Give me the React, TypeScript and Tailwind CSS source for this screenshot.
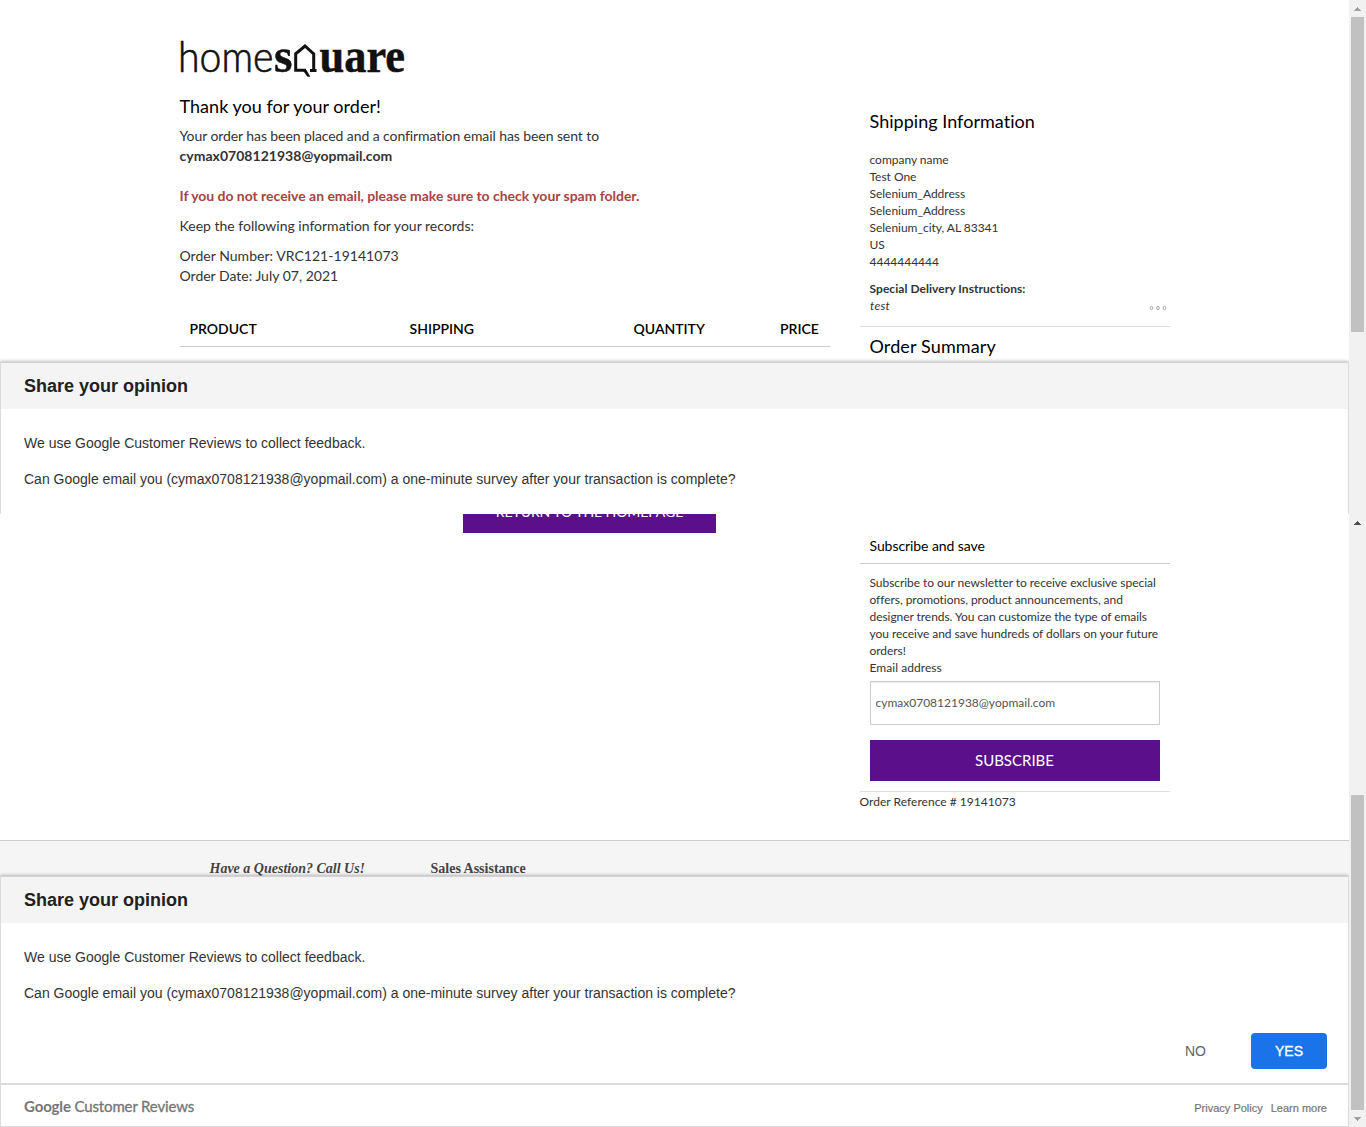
import React from "react";

function Logo() {
  return (
    <svg width="228" height="44" viewBox="0 0 228 44" className="block" role="img" aria-label="homesquare">
      <g fill="#111" stroke="#111">
        <text x="-2" y="36.500" fontFamily="Lato" fontWeight="300" fontSize="43.500" strokeWidth="0.700" textLength="95.500" lengthAdjust="spacingAndGlyphs">home</text>
        <text x="94" y="36.500" fontFamily="Liberation Serif" fontWeight="700" fontSize="49" strokeWidth="0.500" textLength="18.500" lengthAdjust="spacingAndGlyphs">s</text>
        <text x="139.500" y="36.500" fontFamily="Liberation Serif" fontWeight="700" fontSize="49" strokeWidth="0.500" textLength="85.500" lengthAdjust="spacingAndGlyphs">uare</text>
      </g>
      <path d="M130 35.500H136.500M133.700 36.500V18.800L125 11L115.700 18.800V35.300H126" fill="none" stroke="#111" strokeWidth="3" />
      <path d="M122.500 35H126.500L130.300 41.800H127.500Z" fill="#111" />
    </svg>
  );
}

function Arrow({ down, dark }: { down?: boolean; dark?: boolean }) {
  return (
    <svg width="17" height="17" viewBox="0 0 17 17" shapeRendering="crispEdges" className="block shrink-0">
      <path d={down ? "M5 7h7v1h-1v1h-1v1h-1v1h-1v-1h-1v-1h-1v-1h-1z" : "M8 7h1v1h1v1h1v1h1v1h-7v-1h1v-1h1v-1h1z"} fill={dark ? "#505050" : "#a3a3a3"} />
    </svg>
  );
}

function Survey() {
  return (
    <div className="h-[251px] w-[1349px] border border-[#dadce0] border-t-[#d2d2d2] bg-white font-['Liberation_Sans',sans-serif] shadow-[0_0_4px_rgba(0,0,0,0.4)]">
      <div className="flex h-[46px] items-center bg-[#f4f4f4] pl-[23px] text-[18px] font-bold text-[#212121]">Share your opinion</div>
      <div className="h-[160px] pl-[23px] pt-[25px] text-[14px] leading-[18px] text-[#333]">
        <p>We use Google Customer Reviews to collect feedback.</p>
        <p className="mt-[18px]">Can Google email you (cymax0708121938@yopmail.com) a one-minute survey after your transaction is complete?</p>
        <div className="mt-[31px] flex items-center justify-end pr-[21px]">
          <button className="mr-[45px] text-[14px] text-[#5f6368]">NO</button>
          <button className="h-9 w-[76px] rounded-[4px] bg-[#1a73e8] text-[14px] text-white [-webkit-text-stroke:0.3px_white]">YES</button>
        </div>
      </div>
      <div className="flex h-[43px] items-center justify-between border-t-2 border-[#dadce0] pl-[23px] pr-[21px] pt-[1px] text-[#757575]">
        <span className="font-['Lato',sans-serif] text-[15px] tracking-[-0.14px]"><b className="font-bold">Google</b> <span className="[-webkit-text-stroke:0.3px_#757575]">Customer Reviews</span></span>
        <span className="mt-[3px] flex gap-2 text-[11px] [-webkit-text-stroke:0.2px_#757575]"><a>Privacy Policy</a><a>Learn more</a></span>
      </div>
    </div>
  );
}

export default function App() {
  return (
    <div className="h-[1127px] w-[1366px] overflow-hidden bg-white font-['Lato',sans-serif] text-[14px] leading-5 text-[#333] [font-variant-ligatures:none]">
      <section className="flex h-[514px] overflow-hidden">
        <div className="w-[1349px] overflow-hidden">
          <div className="ml-[180px] flex h-[362px] w-[990px] justify-between">
            <main className="w-[650px] pt-[35px]">
              <Logo />
              <div className="-ml-[0.5px]">
                <h1 className="mt-[17px] text-[18px] leading-5 tracking-[0.03px] text-black">Thank you for your order!</h1>
                <p className="mt-[10px]"><span className="tracking-[-0.085px]">Your order has been placed and a confirmation email has been sent to</span><br /><b className="tracking-[0.03px]">cymax0708121938@yopmail.com</b></p>
                <p className="mt-5 font-bold tracking-[-0.03px] text-[#a94442]">If you do not receive an email, please make sure to check your spam folder.</p>
                <p className="mt-[10px]">Keep the following information for your records:</p>
                <p className="mt-[10px]"><span className="tracking-[0.03px]">Order Number: VRC121-19141073</span><br />Order Date: July 07, 2021</p>
              </div>
              <div className="mt-[26px] flex h-[35px] border-b border-[#ccc] pt-[7px] font-semibold text-black">
                <span className="w-[220px] pl-[9.5px]">PRODUCT</span>
                <span className="w-[224px] pl-[9.5px]">SHIPPING</span>
                <span className="w-[146px] pl-[9.5px]">QUANTITY</span>
                <span className="pl-[10px]">PRICE</span>
              </div>
            </main>
            <aside className="w-[310px] pt-[111px] text-[12px] leading-[17px]">
              <h2 className="pl-[9.5px] text-[18px] leading-5 tracking-[0.03px] text-black">Shipping Information</h2>
              <address className="mt-5 pl-[9.5px] not-italic tracking-[-0.02px]">company name<br />Test One<br />Selenium_Address<br />Selenium_Address<br />Selenium_city, AL 83341<br />US<br />4444444444</address>
              <p className="mt-[10px] pl-[9.5px] font-bold tracking-[0.05px]">Special Delivery Instructions:</p>
              <div className="flex h-[30px] justify-between border-b border-[#ddd] pl-[10px] pr-[3px]">
                <i className="tracking-[0.3px]">test</i>
                <svg width="18" height="6" viewBox="0 0 18 6" className="mt-[8px]" fill="none" stroke="#aaa" strokeWidth="1">
                  <ellipse cx="2.500" cy="3" rx="1.300" ry="1.700" /><ellipse cx="9" cy="3" rx="1.300" ry="1.700" /><ellipse cx="15.500" cy="3" rx="1.300" ry="1.700" />
                </svg>
              </div>
              <h2 className="mt-[9px] pl-[9.5px] text-[18px] leading-5 tracking-[0.12px] text-black">Order Summary</h2>
            </aside>
          </div>
          <Survey />
        </div>
        <div className="w-[17px] bg-[#f1f1f1]"><Arrow /><div className="ml-[2px] h-[315px] w-[13px] bg-[#c1c1c1]" /></div>
      </section>
      <section className="flex h-[613px] overflow-hidden">
        <div className="w-[1349px] overflow-hidden">
          <div className="ml-[180px] flex h-[326px] w-[990px] justify-between">
            <main className="w-[650px] pl-[283px]">
              <div className="-mt-[22px] flex h-[41px] w-[253px] items-center justify-center bg-[#5b0f8b] pb-[2px] text-[14px] tracking-[-0.08px] text-white">RETURN TO THE HOMEPAGE</div>
            </main>
            <aside className="w-[310px] pt-[22px] text-[12px] leading-[17px]">
              <h3 className="h-7 border-b border-[#ccc] pl-[9.5px] text-[14px] leading-5 tracking-[-0.07px] text-black">Subscribe and save</h3>
              <div className="border-b border-[#ddd] px-[10px] pb-[10px] pt-[10px]">
                <p className="-ml-[0.5px] whitespace-nowrap tracking-[-0.05px]">Subscribe to our newsletter to receive exclusive special<br />offers, promotions, product announcements, and<br /><span className="tracking-[-0.06px]">designer trends. You can customize the type of emails</span><br />you receive and save hundreds of dollars on your future<br />orders!</p>
                <p className="-ml-[0.5px] tracking-[0.05px]">Email address</p>
                <input readOnly value="cymax0708121938@yopmail.com" className="mt-[5px] mb-[15px] block h-11 w-full rounded-none border border-[#ccc] pb-[2px] pl-[4.5px] text-[12px] text-[#555] shadow-[inset_0_1px_1px_rgba(0,0,0,0.075)] outline-none" />
                <button className="block h-[41px] w-full bg-[#5b0f8b] pr-[1px] text-[15px] text-white">SUBSCRIBE</button>
              </div>
              <p className="-ml-[0.5px] mt-[1px] tracking-[0.03px]">Order Reference # 19141073</p>
            </aside>
          </div>
          <footer className="flex h-[37px] border-t border-[#ccc] bg-[#f5f5f5] pl-[209.5px] pt-[18px] font-['Liberation_Serif',serif] text-[14px] font-bold text-[#444]">
            <i className="w-[221px]">Have a Question? Call Us!</i><span>Sales Assistance</span>
          </footer>
          <div className="relative -mt-[1px]"><Survey /></div>
        </div>
        <div className="flex w-[17px] flex-col bg-[#f1f1f1]"><Arrow dark /><div className="ml-[2px] mt-[264px] h-[315px] w-[13px] bg-[#c1c1c1]" /><Arrow down /></div>
      </section>
    </div>
  );
}
